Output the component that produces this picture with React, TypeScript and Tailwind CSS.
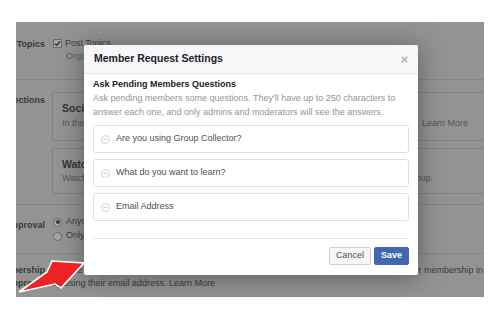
import type { ReactNode } from "react";

const QUESTIONS = ["Are you using Group Collector?", "What do you want to learn?", "Email Address"];

function Row({ label, className, labelClass, children }: { label: ReactNode; className: string; labelClass: string; children: ReactNode }) {
  return (
    <div className={`flex border-b border-[#858585] ${className}`}>
      <div className={`flex w-[29px] shrink-0 flex-col items-end whitespace-nowrap font-bold text-[#3a3a3a] ${labelClass}`}>
        {label}
      </div>
      <div className="ml-[7px] min-w-0 flex-1">{children}</div>
    </div>
  );
}

function Background() {
  return (
    <div className="flex flex-col text-[9px] text-[#3c3c3c]">
      {/* Topics */}
      <Row label={<span>Topics</span>} className="h-[58px]" labelClass="pt-[16px] leading-[12px]">
        <div className="flex h-[14px] items-center pt-[1px] mt-[14px] pl-[1px]">
          <span className="flex size-[9px] items-center justify-center rounded-[1px] border border-[#6a6a6a] bg-[#a6a6a6]">
            <svg className="size-[7px]" viewBox="0 0 10 10" fill="none" stroke="#2e2e2e" strokeWidth={2}>
              <path d="M1.5 5.2 4 7.6 8.6 2.2" />
            </svg>
          </span>
          <span className="ml-[3px] leading-[13px]">Post Topics</span>
        </div>
        <div className="ml-[14px] whitespace-nowrap leading-[13px] text-[#5c5c5c]">Organize posts by topic so members can find them</div>
      </Row>

      {/* Sections */}
      <Row label={<span>Sections</span>} className="h-[125px]" labelClass="pt-[14px] leading-[12px]">
        <div className="flex flex-col pt-[12px]">
          <div className="h-[49px] w-[470px] rounded-[2px] border border-[#808080] px-[9px] pt-[8px]">
            <div className="whitespace-nowrap text-[10.5px] font-bold leading-[14px] text-[#333]">Social Learning Units</div>
            <div className="mt-[1px] flex w-[406px] justify-between whitespace-nowrap leading-[14px] text-[#555]">
              <span>In this group type, admins can organize posts into units</span>
              <span>. Learn More</span>
            </div>
          </div>
          <div className="mt-[7px] h-[46px] w-[470px] rounded-[2px] border border-[#808080] px-[9px] pt-[8px]">
            <div className="whitespace-nowrap text-[10.5px] font-bold leading-[14px] text-[#333]">Watch Party</div>
            <div className="flex w-[371px] justify-between whitespace-nowrap leading-[14px] text-[#555]">
              <span>Watch videos together with the members</span>
              <span>group.</span>
            </div>
          </div>
        </div>
      </Row>

      {/* Approval */}
      <Row label={<span>Approval</span>} className="h-[49px]" labelClass="pt-[14px] leading-[12px]">
        <div className="flex flex-col pt-[10px] pl-[1px]">
          <div className="flex h-[14px] items-center">
            <span className="flex size-[9px] items-center justify-center rounded-full border border-[#6a6a6a] bg-[#a6a6a6]">
              <span className="size-[4px] rounded-full bg-[#3a3a3a]" />
            </span>
            <span className="ml-[4px]">Anyone in the group</span>
          </div>
          <div className="flex h-[14px] items-center">
            <span className="size-[9px] rounded-full border border-[#6a6a6a] bg-[#a6a6a6]" />
            <span className="ml-[4px]">Only admins and moderators</span>
          </div>
        </div>
      </Row>

      {/* Membership approval */}
      <Row
        label={
          <>
            <span>Membership</span>
            <span>Approval</span>
          </>
        }
        className="h-[43px] border-b-0"
        labelClass="pt-[10px] leading-[13px]"
      >
        <div className="flex flex-col whitespace-nowrap pt-[10px] leading-[13px]">
          <div className="flex">
            <span className="w-[352px] shrink-0 overflow-hidden">Anyone can approve people who have paid for</span>
            <span>their membership in</span>
          </div>
          <div>by using their email address. Learn More</div>
        </div>
      </Row>
    </div>
  );
}

function MinusCircle() {
  return (
    <svg className="size-[9px] shrink-0" viewBox="0 0 10 10" fill="none" stroke="#c4c8ce" strokeWidth={0.9}>
      <circle cx="5" cy="5" r="4.4" />
      <path d="M2.7 5h4.6" />
    </svg>
  );
}

function Modal() {
  return (
    <div className="absolute left-[84px] top-[45px] h-[230px] w-[334px] overflow-hidden rounded-[2px] bg-white shadow-[0_2px_26px_rgba(0,0,0,0.38)]">
      <div className="flex h-[29px] items-center justify-between border-b border-[#e5e5e5] bg-[#f6f7f9] pl-[10px] pr-[10px]">
        <span className="text-[10.5px] font-bold text-[#1d2129]">Member Request Settings</span>
        <svg className="size-[7px]" viewBox="0 0 10 10" fill="none" stroke="#a8acb2" strokeWidth={1.8}>
          <path d="M1 1l8 8M9 1 1 9" />
        </svg>
      </div>
      <div className="px-[9px] pt-[3px]">
        <div className="text-[9px] font-bold leading-[14px] text-[#1d2129]">Ask Pending Members Questions</div>
        <p className="text-[9px] leading-[14px] text-[#90949c]">
          Ask pending members some questions. They'll have up to 250 characters to answer each one, and only admins and moderators will see the answers.
        </p>
        <div className="mt-[6px] flex flex-col gap-[6px]">
          {QUESTIONS.map((q) => (
            <div key={q} className="flex h-[28px] items-center gap-[6px] rounded-[3px] border border-[#dddfe2] pl-[7px]">
              <MinusCircle />
              <span className="text-[9px] text-[#4b4f56]">{q}</span>
            </div>
          ))}
        </div>
        <div className="mt-[17px] border-t border-[#e5e5e5]" />
        <div className="flex justify-end gap-[3px] pt-[8px]">
          <button className="h-[18px] w-[42px] rounded-[2px] border border-[#ced0d4] bg-[#f6f7f9] text-[9px] text-[#4b4f56]">
            Cancel
          </button>
          <button className="h-[18px] w-[35px] rounded-[2px] border border-[#4267b2] bg-[#4267b2] text-[9px] font-bold text-white">
            Save
          </button>
        </div>
      </div>
    </div>
  );
}

function Arrow() {
  return (
    <svg className="absolute left-[10px] top-[250px] h-[50px] w-[80px]" viewBox="10 250 80 50">
      <polygon
        points="19,292 47,272 52,261 84,263 61,288 55,284"
        fill="#ec2226"
        stroke="#ffffff"
        strokeWidth={1.6}
        strokeLinejoin="miter"
      />
    </svg>
  );
}

export default function App() {
  return (
    <div className="relative h-[320px] w-[500px] overflow-hidden bg-white pl-4 pt-[22px] font-['Liberation_Sans',Arial,sans-serif]">
      <div className="relative h-[275px] w-[468px] overflow-hidden bg-[#939393]">
        <Background />
      </div>
      <Modal />
      <Arrow />
    </div>
  );
}
